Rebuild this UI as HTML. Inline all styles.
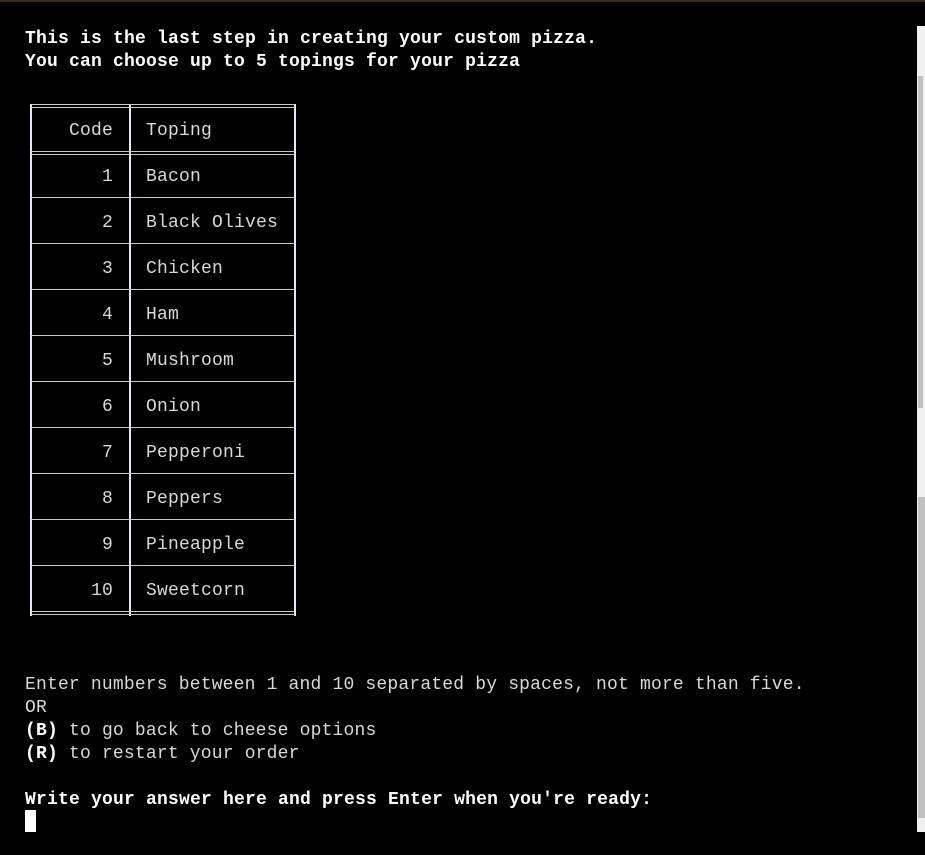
<!DOCTYPE html>
<html><head><meta charset="utf-8"><style>
html,body{margin:0;padding:0;background:#000;width:925px;height:855px;overflow:hidden;position:relative;font-family:"Liberation Mono",monospace;color:#d8d8d8}
.t{position:absolute;left:25px;font-size:18px;line-height:23px;white-space:pre;letter-spacing:0.18px}
.b{font-weight:bold;color:#fff;letter-spacing:0.2px}
.h{position:absolute;left:31px;width:264px;height:1px;background:#c8c8c8}
.v{position:absolute;width:2px;background:#e8e8f4;top:104px;height:512px}
.c{position:absolute;font-size:18px;line-height:20px;white-space:pre;color:#d8d8d8;letter-spacing:0.2px}
</style></head><body>
<div style="position:absolute;left:0;top:0;width:925px;height:2px;background:#3a2a20"></div>
<div class="t b" style="top:28px">This is the last step in creating your custom pizza.
You can choose up to 5 topings for your pizza</div>

<div class="v" style="left:30px"></div>
<div class="v" style="left:129px"></div>
<div class="v" style="left:294px"></div>
<div class="h" style="top:104px"></div><div class="h" style="top:107px"></div>
<div class="h" style="top:151px"></div><div class="h" style="top:154px"></div>
<div class="h" style="top:197px"></div>
<div class="h" style="top:243px"></div>
<div class="h" style="top:289px"></div>
<div class="h" style="top:335px"></div>
<div class="h" style="top:381px"></div>
<div class="h" style="top:427px"></div>
<div class="h" style="top:473px"></div>
<div class="h" style="top:519px"></div>
<div class="h" style="top:565px"></div>
<div class="h" style="top:611px"></div><div class="h" style="top:614px"></div>

<div class="c" style="left:69px;top:121px">Code</div><div class="c" style="left:146px;top:121px">Toping</div>
<div class="c" style="left:102px;top:167px">1</div><div class="c" style="left:146px;top:167px">Bacon</div>
<div class="c" style="left:102px;top:213px">2</div><div class="c" style="left:146px;top:213px">Black Olives</div>
<div class="c" style="left:102px;top:259px">3</div><div class="c" style="left:146px;top:259px">Chicken</div>
<div class="c" style="left:102px;top:305px">4</div><div class="c" style="left:146px;top:305px">Ham</div>
<div class="c" style="left:102px;top:351px">5</div><div class="c" style="left:146px;top:351px">Mushroom</div>
<div class="c" style="left:102px;top:397px">6</div><div class="c" style="left:146px;top:397px">Onion</div>
<div class="c" style="left:102px;top:443px">7</div><div class="c" style="left:146px;top:443px">Pepperoni</div>
<div class="c" style="left:102px;top:489px">8</div><div class="c" style="left:146px;top:489px">Peppers</div>
<div class="c" style="left:102px;top:535px">9</div><div class="c" style="left:146px;top:535px">Pineapple</div>
<div class="c" style="left:91px;top:581px">10</div><div class="c" style="left:146px;top:581px">Sweetcorn</div>

<div class="t" style="top:674px">Enter numbers between 1 and 10 separated by spaces, not more than five.
OR
<span class="b">(B)</span> to go back to cheese options
<span class="b">(R)</span> to restart your order

<span class="b">Write your answer here and press Enter when you're ready:</span></div>
<div style="position:absolute;left:25px;top:810px;width:11px;height:22px;background:#fff"></div>

<div style="position:absolute;left:917px;top:26px;width:8px;height:806px;background:#f0f0f0"></div>
<div style="position:absolute;left:918px;top:76px;width:5px;height:332px;background:#c1c1c1"></div>
<div style="position:absolute;left:918px;top:497px;width:7px;height:321px;background:#c1c1c1"></div>
</body></html>
